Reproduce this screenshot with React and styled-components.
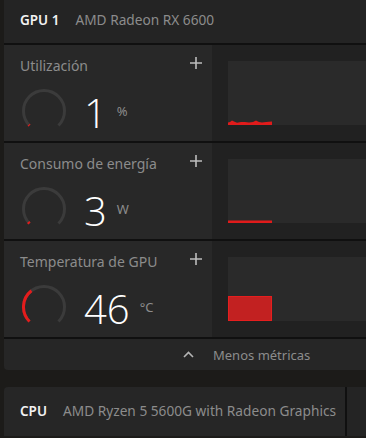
import React from 'react';
import styled, { createGlobalStyle } from 'styled-components';

const GlobalStyle = createGlobalStyle`
  body {
    margin: 0;
    background: #1c1b19;
    font-family: "Segoe UI", "Noto Sans", sans-serif;
    overflow: hidden;
  }
`;

const metrics = [
  { title: 'Utilización', value: '1', unit: '%', gauge: 0.012, chart: 'util' },
  { title: 'Consumo de energía', value: '3', unit: 'W', gauge: 0.02, chart: 'power' },
  { title: 'Temperatura de GPU', value: '46', unit: '°C', gauge: 0.36, chart: 'temp' }
];

const arcPoint = (deg, r) => {
  const a = (deg * Math.PI) / 180;
  return [22 + r * Math.sin(a), 22 - r * Math.cos(a)];
};

const arcPath = (from, to, r) => {
  const [x1, y1] = arcPoint(from, r);
  const [x2, y2] = arcPoint(to, r);
  const large = to - from > 180 ? 1 : 0;
  return `M ${x1} ${y1} A ${r} ${r} 0 ${large} 1 ${x2} ${y2}`;
};

const Gauge = ({ level }) => (
  <GaugeSvg width="44" height="44" viewBox="0 0 44 44">
    <path d={arcPath(225, 495, 20.5)} stroke="#3b3b3b" strokeWidth="3" fill="none" />
    <path d={arcPath(225, 225 + level * 270, 20.5)} stroke="#e41c1c" strokeWidth="3" fill="none" />
  </GaugeSvg>
);

const Chart = ({ kind }) => (
  <ChartSvg>
    {kind === 'util' && (
      <path
        d="M0 64 L0 61.5 L2 61 L4 59.6 L6 60.6 L9 61.8 L13 61 L17 61 L21 61.6 L25 61 L28 59.6 L31 61 L34 61.6 L38 61 L44 60.6 L44 64 Z"
        fill="#e01b1b"
      />
    )}
    {kind === 'power' && <rect x="0" y="61.5" width="44" height="2.5" fill="#e01b1b" />}
    {kind === 'temp' && (
      <rect x="0.5" y="39.5" width="43" height="24" fill="#c22121" stroke="#e61e1e" strokeWidth="1" />
    )}
  </ChartSvg>
);

const PlusIcon = () => (
  <svg width="12" height="12" viewBox="0 0 12 12">
    <path d="M6 0 V12 M0 6 H12" stroke="#bcbcbc" strokeWidth="1.6" />
  </svg>
);

const ChevronUp = () => (
  <svg width="11" height="7" viewBox="0 0 11 7">
    <path d="M1 6 L5.5 1.5 L10 6" stroke="#b4b4b4" strokeWidth="1.6" fill="none" />
  </svg>
);

const MetricRow = ({ title, value, unit, gauge, chart }) => (
  <Row>
    <Info>
      <TitleLine>
        <Title>{title}</Title>
        <PlusIcon />
      </TitleLine>
      <Reading>
        <Gauge level={gauge} />
        <Value>{value}</Value>
        <Unit>{unit}</Unit>
      </Reading>
    </Info>
    <Graph>
      <Chart kind={chart} />
    </Graph>
  </Row>
);

export default function App() {
  return (
    <Page>
      <GlobalStyle />
      <Section>
        <Header>
          <DeviceTag>GPU 1</DeviceTag>
          <DeviceName>AMD Radeon RX 6600</DeviceName>
        </Header>
        {metrics.map((m) => (
          <MetricRow key={m.title} {...m} />
        ))}
        <Toggle>
          <ChevronUp />
          <ToggleText>Menos métricas</ToggleText>
        </Toggle>
      </Section>
      <CpuBar>
        <CpuHeader>
          <DeviceTag>CPU</DeviceTag>
          <DeviceName>AMD Ryzen 5 5600G with Radeon Graphics</DeviceName>
        </CpuHeader>
        <CpuSide />
      </CpuBar>
    </Page>
  );
}

const Page = styled.div`
  padding-left: 4px;
  width: 362px;
  height: 438px;
`;

const Section = styled.section`
  display: flex;
  flex-direction: column;
`;

const Header = styled.div`
  height: 43px;
  background: #242424;
  display: flex;
  align-items: center;
  gap: 16px;
  padding-left: 16px;
  padding-bottom: 4px;
  box-sizing: border-box;
`;

const DeviceTag = styled.span`
  color: #f2f2f2;
  font-size: 13.5px;
  font-weight: 600;
`;

const DeviceName = styled.span`
  color: #8c8c8c;
  font-size: 13.7px;
`;

const Row = styled.div`
  display: grid;
  grid-template-columns: 208px 1fr;
  height: 96px;
  border-top: 2px solid #101010;
`;

const Info = styled.div`
  background: #282828;
  padding: 13px 10px 0 16px;
`;

const TitleLine = styled.div`
  display: flex;
  justify-content: space-between;
  align-items: flex-start;
  svg {
    margin-top: -1px;
  }
`;

const Title = styled.div`
  color: #8c8c8c;
  font-size: 14px;
  line-height: 16px;
`;

const Reading = styled.div`
  display: flex;
  align-items: center;
  margin-top: 13px;
  padding-left: 2px;
`;

const GaugeSvg = styled.svg`
  flex: none;
  margin-right: 18px;
`;

const Value = styled.span`
  color: #ffffff;
  font-family: "Segoe UI", "Open Sans", sans-serif;
  font-weight: 300;
  font-size: 40px;
  line-height: 44px;
  margin-top: 4px;
  margin-right: 10px;
`;

const Unit = styled.span`
  color: #8c8c8c;
  font-size: 13px;
`;

const Graph = styled.div`
  background: #212121;
  padding: 16px 0 16px 16px;
`;

const ChartSvg = styled.svg`
  display: block;
  width: 100%;
  height: 64px;
  background: #2a2a2a;
`;

const Toggle = styled.div`
  height: 31px;
  border-top: 2px solid #101010;
  border-bottom-left-radius: 4px;
  background: #262626;
  display: flex;
  align-items: center;
  gap: 19px;
  padding-left: 179px;
`;

const ToggleText = styled.span`
  color: #8c8c8c;
  font-size: 13px;
`;

const CpuBar = styled.div`
  display: flex;
  margin-top: 17px;
  height: 49px;
`;

const CpuHeader = styled.div`
  width: 343px;
  flex: none;
  background: #262626;
  border-top-left-radius: 4px;
  border-right: 2px solid #101010;
  display: flex;
  align-items: center;
  gap: 16px;
  padding-left: 16px;
  padding-bottom: 2px;
  box-sizing: border-box;
`;

const CpuSide = styled.div`
  flex: 1;
  background: #242424;
`;
